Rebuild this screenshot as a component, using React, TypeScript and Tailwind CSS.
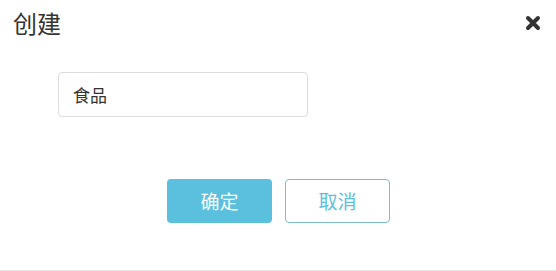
export default function App() {
  return (
    <div
      className="relative h-[271px] w-[556px] bg-white border-b border-[#e5e5e5] text-[#333]"
      style={{ fontFamily: '"Noto Sans CJK SC", "Noto Sans", sans-serif' }}
    >
      {/* Header */}
      <div className="flex items-center justify-between pl-[13px] pr-[13px] pt-[6px]">
        <h3 className="text-[24px] leading-[34px] font-normal">创建</h3>
        <button className="flex h-[20px] w-[20px] items-center justify-center text-[#333]">
          <svg width="16" height="16" viewBox="0 0 16 16">
            <path d="M3 3 L13 13 M13 3 L3 13" stroke="#333" strokeWidth="4" strokeLinecap="round" />
          </svg>
        </button>
      </div>

      {/* Body */}
      <div className="pl-[58px] pt-[32px]">
        <input
          defaultValue="食品"
          className="h-[45px] w-[250px] rounded-[4px] border border-[#ddd] px-[14px] text-[17px] text-[#333] outline-none"
        />
      </div>

      {/* Footer */}
      <div className="mt-[62px] flex justify-center gap-[13px] pl-[1px]">
        <button className="h-[44px] w-[105px] rounded-[4px] bg-[#5bc0de] text-[19px] text-white">确定</button>
        <button className="h-[44px] w-[105px] rounded-[4px] border border-[#7dbccb] bg-white text-[19px] text-[#5bc0de]">
          取消
        </button>
      </div>
    </div>
  );
}
